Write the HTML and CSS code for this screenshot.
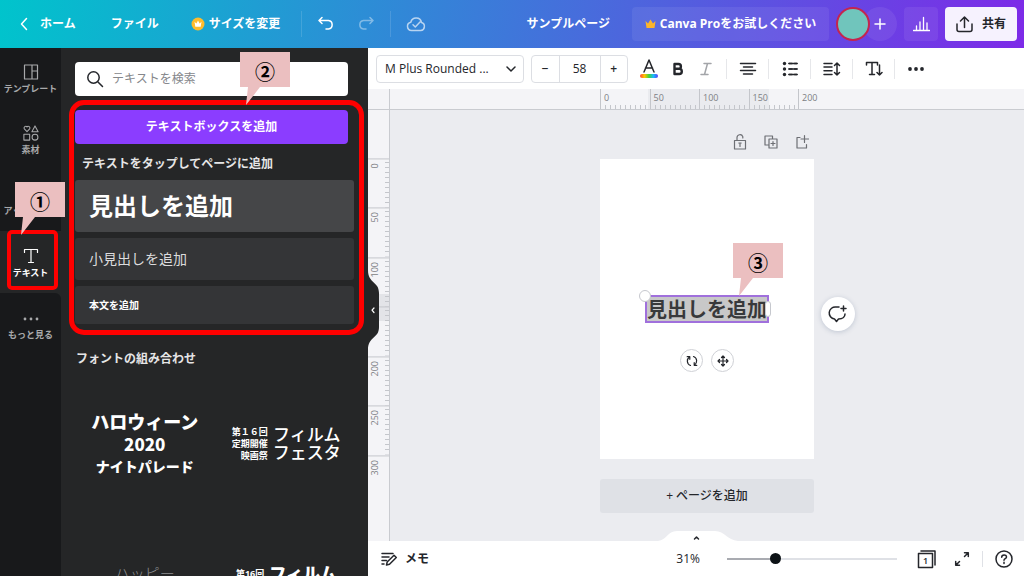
FILE: index.html
```html
<!DOCTYPE html>
<html lang="ja">
<head>
<meta charset="utf-8">
<title>サンプルページ</title>
<link rel="stylesheet" href="styles.css">
</head>
<body>
<header class="topbar">
  <a class="home" href="#"><svg width="8" height="14" viewBox="0 0 8 14"><path d="M6.500 1.500 1.500 7l5 5.500"/></svg>ホーム</a>
  <button class="file">ファイル</button>
  <button class="resize"><svg width="14" height="14" viewBox="0 0 14 14"><circle cx="7" cy="7" r="6.500" fill="#fdbc2c" stroke="none"/><path d="M3.500 4.800 5.400 6.600 7 3.500l1.600 3.100 1.900-1.800-.8 4.900H4.300z" fill="#fff" stroke="none"/></svg>サイズを変更</button>
  <span class="bar-line"></span>
  <button class="undo" aria-label="元に戻す"><svg width="16" height="16" viewBox="0 0 16 16"><path d="M4 1.500 1 4.500l3 3M1.500 4.500h9a4.300 4.300 0 0 1 0 8.500H8"/></svg></button>
  <button class="redo" aria-label="やり直す"><svg width="16" height="16" viewBox="0 0 16 16"><path d="m12 1.500 3 3-3 3M14.500 4.500h-9a4.300 4.300 0 0 0 0 8.500H8"/></svg></button>
  <span class="bar-line"></span>
  <span class="cloud"><svg width="20" height="16" viewBox="0 0 20 16"><path d="M5.500 14.500a4.200 4.200 0 0 1-.7-8.300 5.500 5.500 0 0 1 10.700.3 4.100 4.100 0 0 1-.8 8zM7 8.700l2.300 2.300 4.700-5"/></svg></span>
  <span class="doc-title">サンプルページ</span>
  <button class="pro"><svg width="11" height="10" viewBox="0 0 11 10"><path d="M.5 2 3 4.500 5.500.5 8 4.500 10.500 2 9.500 9h-8z" fill="#fdb52a" stroke="none"/></svg>Canva Proをお試しください</button>
  <div class="people"><span class="avatar"></span><button class="invite" aria-label="メンバーを追加"><svg width="12" height="12" viewBox="0 0 12 12"><path d="M6 1v10M1 6h10"/></svg></button></div>
  <button class="chart" aria-label="インサイト"><svg width="17" height="16" viewBox="0 0 17 16"><path d="M.5 14.500h16M3.500 14V10M7 14V6M10.500 14V1.500M14 14V7"/></svg></button>
  <button class="share"><svg width="17" height="17" viewBox="0 0 17 17"><path d="M1 8v5.500A2 2 0 0 0 3 15.500h11a2 2 0 0 0 2-2V8M8.500 11.500V1.500M4.500 5l4-4 4 4"/></svg>共有</button>
</header>
<div class="app">
  <nav class="rail">
    <a href="#" class="rail-item"><svg width="16" height="16" viewBox="0 0 16 16"><path d="M1.500 1h13v14h-13zM9 1v14M9 7h5.500"/></svg>テンプレート</a>
    <a href="#" class="rail-item"><svg width="18" height="18" viewBox="0 0 18 18"><path d="M4.500 7.500 1.500 4.400C.3 2.700 3-.1 4.500 2.300 6-.1 8.700 2.700 7.500 4.400zM13.500 1l3.500 6.500h-7zM1 10.500h6.500V17H1z"/><circle cx="13.500" cy="13.700" r="3.300"/></svg>素材</a>
    <a href="#" class="rail-item"><svg width="16" height="16" viewBox="0 0 16 16"><path d="M4 13a3.500 3.500 0 0 1 0-7 4 4 0 0 1 8 0 3.500 3.500 0 0 1 0 7M8 14V7M5.500 9.500 8 7l2.500 2.500"/></svg>アップロード</a>
    <a href="#" class="rail-item active"><svg width="16" height="16" viewBox="0 0 16 16"><path d="M1.500 4.500V1.500h13v3M8 1.500v13M5.500 14.500h5"/></svg>テキスト<span class="frame frame-small"></span>
      <span class="callout callout-1"><svg width="50" height="53" viewBox="0 0 50 53"><path d="M0 0h50v35H20L6 53l2-18H0z"/></svg><b>①</b></span></a>
    <a href="#" class="rail-item after"><svg width="16" height="16" viewBox="0 0 16 16"><g fill="currentColor" stroke="none"><circle cx="2" cy="9" r="1.400"/><circle cx="8" cy="9" r="1.400"/><circle cx="14" cy="9" r="1.400"/></g></svg>もっと見る</a>
  </nav>
  <aside class="panel">
    <label class="search"><svg width="18" height="18" viewBox="0 0 18 18"><circle cx="7.500" cy="7.500" r="5.700"/><path d="m12 12 4.500 4.500"/></svg><input type="search" aria-label="テキストを検索" placeholder="テキストを検索"></label>
    <button class="add-box">テキストボックスを追加</button>
    <h2 class="hint">テキストをタップしてページに追加</h2>
    <div class="presets">
      <button class="preset heading">見出しを追加</button>
      <button class="preset subheading">小見出しを追加</button>
      <button class="preset body-text">本文を追加</button>
    </div>
    <h2 class="combos-title">フォントの組み合わせ</h2>
    <div class="combos">
      <button class="combo halloween"><span class="hw-1">ハロウィーン</span><span class="hw-2">2020</span><span class="hw-3">ナイトパレード</span></button>
      <button class="combo film"><span class="film-small">第１６回<br>定期開催<br>映画祭</span><span class="film-big">フィルム<br>フェスタ</span></button>
      <button class="combo happy">ハッピー</button>
      <button class="combo film bold"><span class="film-small">第16回</span><span class="film-big">フィルム</span></button>
    </div>
    <span class="frame frame-large"></span>
    <span class="callout callout-2"><svg width="50" height="53" viewBox="0 0 50 53"><path d="M0 0h50v35H20L6 53l2-18H0z"/></svg><b>②</b></span>
    <button class="collapse" aria-label="パネルを閉じる"><svg width="13" height="80" viewBox="0 0 13 80"><path d="M0 0c0 14 11 11 11 23v34c0 12-11 9-11 23z" fill="#252627" stroke="none"/><path d="M6 38 4 40.200 6 42.500" stroke="#fff" stroke-width="1.200"/></svg></button>
  </aside>
  <main class="editor">
    <div class="toolbar">
      <span class="select-wrap"><select class="font-select" aria-label="フォント"><option>M Plus Rounded ...</option></select><svg width="10" height="6" viewBox="0 0 10 6"><path d="m1 1 4 4 4-4"/></svg></span>
      <div class="size"><button aria-label="小さく">−</button><input aria-label="文字サイズ" value="58"><button aria-label="大きく">+</button></div>
      <button class="tool color" aria-label="文字の色"><svg width="20" height="20" viewBox="0 0 20 20"><defs><linearGradient id="rainbow"><stop offset="0" stop-color="#ff4b3a"/><stop offset=".25" stop-color="#ffc400"/><stop offset=".5" stop-color="#3fd43f"/><stop offset=".75" stop-color="#1bb8ff"/><stop offset="1" stop-color="#5b3df5"/></linearGradient></defs><path d="M5 13 10 1l5 12M6.500 9h7"/><rect x="1" y="15" width="18" height="4" rx="2" fill="url(#rainbow)" stroke="none"/></svg></button>
      <button class="tool bold-tool" aria-label="太字"><svg width="14" height="16" viewBox="0 0 14 16"><path d="M3.500 3h4a2.400 2.400 0 0 1 0 4.800h-4zM3.500 7.800h4.700a2.600 2.600 0 0 1 0 5.200H3.500z" stroke-width="2.400"/></svg></button>
      <button class="tool italic-tool" aria-label="斜体"><svg width="14" height="16" viewBox="0 0 14 16"><path d="M5 2.500h7M2 13.500h7M8.500 2.500l-3 11"/></svg></button>
      <button class="tool ruled" aria-label="配置"><svg width="18" height="16" viewBox="0 0 18 16"><path d="M1.500 2.500h15M4.500 6h9M1.500 9.500h15M4.500 13h9"/></svg></button>
      <button class="tool ruled" aria-label="リスト"><svg width="16" height="16" viewBox="0 0 16 16"><path d="M7 2.500h3M12.500 2.500H15M7 8h3M12.500 8H15M7 13.500h3M12.500 13.500H15"/><path d="M7 2.500h8M7 8h8M7 13.500h8"/><g fill="currentColor" stroke="none"><circle cx="2.500" cy="2.500" r="1.700"/><circle cx="2.500" cy="8" r="1.700"/><circle cx="2.500" cy="13.500" r="1.700"/></g></svg></button>
      <button class="tool ruled" aria-label="間隔"><svg width="18" height="16" viewBox="0 0 18 16"><path d="M1 2.500h8M1 6h8M1 9.800h8M1 13.500h8M14 2v12M11.500 4.500 14 2l2.500 2.500M11.500 11.500 14 14l2.500-2.500"/></svg></button>
      <button class="tool ruled" aria-label="縦書き"><svg width="18" height="16" viewBox="0 0 18 16"><path d="M1.500 4V1.500h11V4M7 1.500v12M4.500 13.500h5M14.500 4v10M12 11.500l2.500 2.500 2.500-2.500"/></svg></button>
      <button class="tool ruled" aria-label="その他"><svg width="18" height="16" viewBox="0 0 18 16"><g fill="currentColor" stroke="none"><circle cx="3" cy="8" r="1.900"/><circle cx="9" cy="8" r="1.900"/><circle cx="15" cy="8" r="1.900"/></g></svg></button>
    </div>
    <div class="workspace">
      <div class="corner"></div>
      <div class="ruler-x"><div class="scale-x"><span>0</span><span>50</span><span>100</span><span>150</span><span class="end">200</span></div></div>
      <div class="ruler-y"><div class="scale-y"><span>0</span><span>50</span><span>100</span><span>150</span><span>200</span><span>250</span><span class="end">300</span></div></div>
      <div class="canvas">
        <div class="page-tools">
          <button aria-label="ロック"><svg width="14" height="16" viewBox="0 0 14 16"><path d="M1.500 6.500h11v8.500h-11zM4 6.500V3.800a3 3 0 0 1 5.800-1.200V4M7 9v3.500M5.800 9h2.400"/></svg></button>
          <button aria-label="複製"><svg width="14" height="16" viewBox="0 0 14 16"><path d="M4.500 11H1V2h7.500v2.500M5 5h8v9H5zM9 7.500v4M7 9.500h4"/></svg></button>
          <button aria-label="ページを追加"><svg width="14" height="16" viewBox="0 0 14 16"><path d="M5 3.500H2V14h9.500v-3.500M9.500 1.500v7M6 5h7.500"/></svg></button>
        </div>
        <div class="page">
          <div class="selection"><span>見出しを追加</span><i class="handle-corner"></i><i class="handle-side"></i></div>
          <div class="object-tools">
            <button aria-label="回転"><svg width="12" height="12" viewBox="0 0 12 12"><path d="M4.500 10.500C.5 9 .5 4 3.500 2M1.200 1.700h2.600v2.600M7.500 1.500c4 1.500 4 6.500 1 8.500M10.800 10.300H8.200V7.700"/></svg></button>
            <button aria-label="移動"><svg width="12" height="12" viewBox="0 0 12 12"><path d="M6 1v10M1 6h10M4.500 2.500 6 1l1.500 1.500M4.500 9.500 6 11l1.500-1.500M2.500 4.500 1 6l1.500 1.500M9.500 4.500 11 6 9.500 7.500"/></svg></button>
          </div>
          <button class="comment" aria-label="コメント"><svg width="20" height="18" viewBox="0 0 20 18"><path d="M11 2H8a6 6 0 0 0-1.500 12l2 2.500 2-2.500C15 14 17 11.500 17 9M15.500 1v5M13 3.500h5"/></svg></button>
          <span class="callout callout-3"><svg width="50" height="53" viewBox="0 0 50 53"><path d="M0 0h50v35H20L6 53l2-18H0z"/></svg><b>③</b></span>
        </div>
        <button class="add-page">+ ページを追加</button>
        <button class="tab" aria-label="ページ一覧を開く"><svg width="80" height="10" viewBox="0 0 80 10"><path d="M0 10C9 9 9 0 19 0h38c10 0 12 9 23 10z" fill="#fff" stroke="none"/><path d="m36.500 8 2-2 2 2"/></svg></button>
      </div>
    </div>
    <footer class="bottom">
      <button class="memo"><svg width="17" height="16" viewBox="0 0 17 16"><path d="M1 2.500h11M1 6h7M1 9.500h4.500M1 13h2M5.500 14l.7-3L13 4.200l2.300 2.300-6.800 6.800z"/></svg>メモ</button>
      <span class="zoom">31%</span>
      <input class="slider" type="range" min="0" max="100" value="27" aria-label="ズーム">
      <button class="pages" aria-label="ページ"><svg width="20" height="20" viewBox="0 0 20 20"><path d="M1.500 4.500h14v14h-14zM4 2h14v14"/></svg><span>1</span></button>
      <button class="expand" aria-label="全画面"><svg width="16" height="16" viewBox="0 0 16 16"><path d="M10.500 5.500 14 2M10.500 1.700H14.300V5.500M5.500 10.500 2 14M1.700 10.500v3.800h3.800"/></svg></button>
      <button class="help" aria-label="ヘルプ"><svg width="18" height="18" viewBox="0 0 18 18"><circle cx="9" cy="9" r="8"/><path d="M6.700 7.200c0-3 4.800-3 4.800-.2 0 1.600-2.500 1.600-2.500 3.200M9 12.300v1.200"/></svg></button>
    </footer>
  </main>
</div>
</body>
</html>
```
FILE: styles.css
```css
* { box-sizing: border-box; }
body {
  margin: 0;
  height: 100vh;
  display: flex;
  flex-direction: column;
  overflow: hidden;
  font: 12px/16px "Open Sans", "Noto Sans CJK JP", sans-serif;
  color: #24262b;
}
button, input, select { font: inherit; color: inherit; border: 0; padding: 0; margin: 0; background: none; }
a { color: inherit; text-decoration: none; }
h2 { margin: 0; font-size: 12px; line-height: 16px; }
svg { display: block; flex: none; fill: none; stroke: currentColor; stroke-width: 1.5; stroke-linecap: round; stroke-linejoin: round; }

.topbar {
  flex: none;
  height: 48px;
  padding: 0 7px 0 20px;
  display: flex;
  align-items: center;
  color: #fff;
  font-weight: 700;
  background: linear-gradient(100deg, #00c4cc, #7d2ae8);
}
.home { display: flex; align-items: center; gap: 12px; }
.file { margin-left: 35px; }
.resize { display: flex; align-items: center; gap: 4px; margin-left: 32px; }
.bar-line { width: 1px; height: 26px; background: #ffffff22; }
.resize + .bar-line { margin-left: 21px; }
.undo { margin-left: 16px; }
.redo { margin: 0 16px 0 24px; opacity: .4; }
.cloud { margin-left: 15px; opacity: .65; }
.doc-title { margin-left: auto; }
.pro {
  display: flex;
  align-items: center;
  justify-content: center;
  gap: 4px;
  width: 197px;
  height: 34px;
  margin-left: 22px;
  border-radius: 4px;
  background: #ffffff12;
}
.people { display: flex; margin-left: 7px; }
.avatar { z-index: 1; width: 34px; height: 34px; border-radius: 50%; border: 2px solid #c4254f; background: #70c5bc; }
.invite { display: grid; place-items: center; width: 34px; height: 34px; margin-left: -7px; border-radius: 50%; background: #ffffff12; }
.chart { display: grid; place-items: center; width: 34px; height: 34px; margin-left: 7px; border-radius: 4px; background: #ffffff12; }
.chart svg { stroke-width: 1.3; }
.share {
  display: flex;
  align-items: center;
  justify-content: center;
  gap: 9px;
  width: 72px;
  height: 34px;
  margin-left: 7px;
  border-radius: 4px;
  background: #f6f2fe;
  color: #24262b;
}

.app { flex: 1; min-height: 0; display: flex; }
.rail { flex: none; display: flex; flex-direction: column; width: 61px; background: #252627; color: #a8a9ab; }
.rail-item {
  position: relative;
  flex: none;
  display: flex;
  flex-direction: column;
  align-items: center;
  gap: 2px;
  height: 61px;
  padding-top: 16px;
  background: #18191b;
  font-size: 9px;
  line-height: 14px;
  font-weight: 700;
  white-space: nowrap;
}
.rail-item svg { height: 16px; stroke-width: 1.2; }
.rail-item.active { z-index: 3; height: 62px; padding-top: 17px; background: #252627; color: #fff; }
.rail-item.after { flex: 1; height: auto; padding-top: 17px; border-top-right-radius: 6px; }
.frame { position: absolute; border: 5px solid #f00; pointer-events: none; }
.frame-small { left: 7px; top: -1px; width: 51px; height: 60px; border-width: 4px; border-radius: 5px; }
.frame-large { left: 8px; top: 52px; width: 295px; height: 235px; border-radius: 15px; }
.callout { position: absolute; z-index: 4; width: 50px; color: #000; }
.callout svg, .rail-item .callout svg { height: 53px; fill: #ebbfc0; stroke: none; }
.callout b { position: absolute; inset: 0 0 auto; height: 38px; font: 700 20px/40px "Noto Sans CJK JP", sans-serif; text-align: center; }
.callout-1 { left: 15px; top: -49px; }
.callout-2 { left: 179px; top: 4px; }
.callout-3 { left: 133px; top: 84px; }

.panel {
  position: relative;
  z-index: 2;
  flex: none;
  display: flex;
  flex-direction: column;
  width: 307px;
  padding: 14px 14px 0;
  background: #252627;
  color: #fff;
}
.panel > * { flex: none; }
.search { display: flex; align-items: center; gap: 8px; height: 34px; width: 273px; padding-left: 11px; border-radius: 4px; background: #fff; color: #24262b; }
.search input { flex: 1; min-width: 0; outline: 0; }
.search input::placeholder { color: #85878b; opacity: 1; }
.add-box { width: 273px; height: 34px; margin-top: 14px; border-radius: 4px; background: #8b3dff; font-weight: 700; }
.hint { margin: 12px 0 8px 7px; color: #e5e5e6; }
.presets { display: flex; flex-direction: column; gap: 6px; }
.preset { padding: 0 14px; text-align: left; border-radius: 3px; background: #343537; }
.heading { height: 52px; background: #454648; font-size: 24px; font-weight: 700; }
.subheading { height: 42px; font-size: 14px; color: #dcdcdd; }
.body-text { height: 38px; font-size: 10px; font-weight: 700; }
.combos-title { margin: 27px 0 0 1px; color: #e5e5e6; }
.panel > .combos { flex: 1; min-height: 0; overflow: hidden; display: grid; grid-template-columns: 1fr 1fr; grid-template-rows: 154px 60px; }
.combo { min-width: 0; }
.halloween { display: flex; flex-direction: column; align-items: center; justify-content: center; font-weight: 900; font-family: "Noto Sans CJK JP", sans-serif; }
.hw-1 { font-size: 18px; line-height: 23px; }
.hw-2 { font-size: 17px; line-height: 21px; }
.hw-3 { font-size: 14px; line-height: 24px; }
.film { display: flex; align-items: center; justify-content: center; gap: 5px; padding-left: 4px; }
.film-small { font-size: 9px; line-height: 12px; text-align: right; font-weight: 700; }
.film-big { font-size: 17px; line-height: 18px; font-weight: 500; }
.happy { align-self: start; padding-top: 42px; font-size: 15px; line-height: 20px; color: #8c8d8f; font-weight: 300; }
.film.bold { align-items: flex-start; align-self: start; padding-top: 44px; }
.film.bold .film-small { line-height: 18px; }
.film.bold .film-big { font-weight: 900; }
.collapse { position: absolute; left: 100%; top: 222px; }

.editor { flex: 1; min-width: 0; display: flex; flex-direction: column; }
.toolbar { flex: none; height: 41px; padding-left: 8px; display: flex; align-items: center; background: #fff; }
.select-wrap { position: relative; display: block; }
.select-wrap svg { position: absolute; right: 8px; top: 11px; pointer-events: none; }
.font-select { appearance: none; width: 148px; height: 28px; padding: 0 24px 0 8px; border: 1px solid #dcdee3; border-radius: 4px; background: #fff; }
.size { display: flex; width: 97px; height: 28px; margin-left: 7px; border: 1px solid #dcdee3; border-radius: 4px; }
.size button { flex: 1; font-weight: 600; }
.size input { width: 42px; text-align: center; border: solid #dcdee3; border-width: 0 1px; }
.tool { display: grid; place-items: center; width: 28px; height: 20px; }
.color { margin-left: 7px; }
.bold-tool { margin-left: 1px; }
.italic-tool { margin-right: 6px; color: #a3a5a9; }
.ruled { width: 42px; border-left: 1px solid #e6e7ea; }

.workspace { flex: 1; min-height: 0; display: grid; grid-template-columns: 22px 1fr; grid-template-rows: 21px 1fr; background: #ebecf0; }
.corner, .ruler-x { border-bottom: 1px solid #c9cbd0; background: #f4f4f7; }
.corner, .ruler-y { border-right: 1px solid #c9cbd0; }
.ruler-x { display: flex; justify-content: center; overflow: hidden; font-size: 9px; line-height: 18px; color: #7d7f84; }
.scale-x {
  display: flex;
  width: 214px;
  background: linear-gradient(#eaebef, #eaebef) 48px 0 / 121px 100% no-repeat;
}
.scale-x span { flex: 1; padding-left: 3px; border-left: 1px solid #c4c6cb; background: repeating-linear-gradient(90deg, transparent 0 4px, #c4c6cb 4px 5px) 0 100% / 100% 4px no-repeat; }
.scale-x .end { flex: none; width: 16px; background: none; }
.ruler-y { background: #f4f4f7; padding-top: 48px; font-size: 9px; line-height: 14px; color: #7d7f84; }
.scale-y { display: flex; flex-direction: column; height: 346px; background: linear-gradient(#e3e4e8, #e3e4e8) 0 136px / 100% 27px no-repeat; }
.scale-y span {
  flex: 1;
  padding: 0 0 4px 3px;
  border-bottom: 1px solid #c4c6cb;
  writing-mode: vertical-rl;
  transform: rotate(180deg);
  text-align: right;
  background: repeating-linear-gradient(transparent 0 4px, #c4c6cb 4px 5px) 0 0 / 4px 100% no-repeat;
}
.scale-y .end { background: none; }

.canvas { position: relative; display: flex; flex-direction: column; align-items: center; padding-top: 24px; }
.page-tools { display: flex; justify-content: flex-end; gap: 17px; width: 214px; padding-right: 5px; color: #6d6f74; }
.page-tools svg { stroke-width: 1.2; }
.page { position: relative; width: 214px; height: 300px; margin-top: 9px; background: #fff; }
.page-tools button, .tab { display: block; }
.selection { position: absolute; left: 45px; top: 136px; height: 28px; border: 2px solid #a070dc; background: #c8c8c8; font-size: 20px; line-height: 24px; font-weight: 700; color: #38393b; white-space: nowrap; }
.selection span { display: block; height: 24px; line-height: 24px; font-family: "Noto Sans CJK JP", sans-serif; }
.handle-corner, .handle-side { position: absolute; background: #fff; border: 1px solid #c6c8ce; }
.handle-corner { left: -8px; top: -7px; width: 12px; height: 12px; border-radius: 50%; }
.handle-side { right: -4px; top: 4px; width: 6px; height: 16px; border-radius: 3px; }
.object-tools { position: absolute; top: 190px; left: 80px; display: flex; gap: 8px; }
.object-tools button { display: grid; place-items: center; width: 23px; height: 23px; border: 1px solid #cfd1d6; border-radius: 50%; background: #fff; }
.object-tools svg { stroke-width: 1.2; }
.comment { position: absolute; left: 221px; top: 138px; display: grid; place-items: center; width: 34px; height: 34px; border-radius: 50%; background: #fff; box-shadow: 0 1px 5px #40577a40; }
.add-page { width: 214px; height: 34px; margin-top: 20px; border-radius: 3px; background: #dfe1e6; font-weight: 500; }
.tab { position: absolute; bottom: 0; left: 50%; margin-left: -49px; }

.bottom { flex: none; height: 35px; padding: 0 11px 0 13px; display: flex; align-items: center; background: #fff; }
.memo { display: flex; align-items: center; gap: 7px; font-weight: 700; }
.zoom { margin-left: auto; }
.slider { appearance: none; width: 170px; height: 12px; margin: 0 20px 0 27px; background: linear-gradient(90deg, #a9abb1 28%, #dfe1e6 28%) center / 100% 2px no-repeat; }
.slider::-webkit-slider-thumb { appearance: none; width: 11px; height: 11px; border-radius: 50%; background: #0d1216; }
.pages { position: relative; }
.pages span { position: absolute; left: 1px; top: 4px; width: 15px; line-height: 15px; font-size: 9px; font-weight: 600; text-align: center; }
.expand { margin-left: 17px; padding-right: 12px; border-right: 1px solid #dfe1e6; }
.help { margin-left: 12px; }
```
